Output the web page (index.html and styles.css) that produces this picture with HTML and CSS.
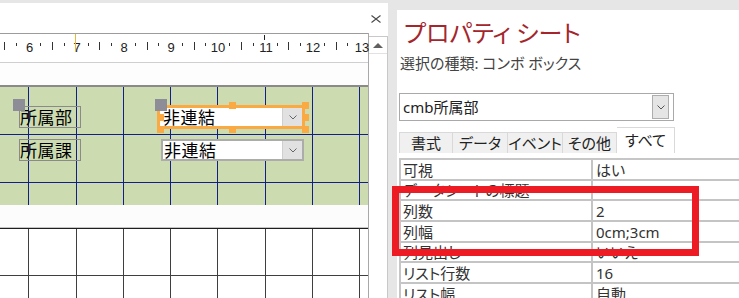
FILE: index.html
```html
<!DOCTYPE html>
<html lang="ja">
<head>
<meta charset="utf-8">
<title>フォーム デザイン</title>
<link rel="stylesheet" href="styles.css">
</head>
<body>
<div class="app">
  <section class="designer">
    <div class="dhead">
      <button class="close" aria-label="閉じる"><svg width="10" height="8" viewBox="0 0 10 8"><path d="M0.5 0.5 L9.5 7.5 M9.5 0.5 L0.5 7.5" stroke="#4a4a4a" stroke-width="1.1" fill="none"/></svg></button>
    </div>
    <div class="dbody">
      <div class="canvas">
        <div class="ruler">
          <svg width="368" height="28" viewBox="0 0 368 28" shape-rendering="crispEdges">
            <path d="M4.5 8v8M52.5 8v8M99.5 8v8M147.5 8v8M194.5 8v8M241.5 8v8M288.5 8v8M336.5 8v8" stroke="#333" stroke-width="1"/>
            <path d="M16.5 9v3M40.5 9v3M64.5 9v3M88.5 9v3M111.5 9v3M135.5 9v3M158.5 9v3M182.5 9v3M205.5 9v3M229.5 9v3M253.5 9v3M277.5 9v3M300.5 9v3M324.5 9v3M347.5 9v3" stroke="#333" stroke-width="1"/>
            <g class="rnum">
              <text x="29.5" y="18">6</text><text x="77" y="18">7</text><text x="124" y="18">8</text><text x="171" y="18">9</text>
              <text x="218" y="18">10</text><text x="266" y="18">11</text><text x="313" y="18">12</text><text x="362" y="18">13</text>
            </g>
            <path d="M75.5 0v18" stroke="#e8b83a" stroke-width="1"/>
            <path d="M264.5 1v5" stroke="#222" stroke-width="1"/>
          </svg>
        </div>
        <div class="hgap"></div>
        <div class="detail">
          <svg class="grid" width="368" height="118" viewBox="0 0 368 118" shape-rendering="crispEdges">
            <path d="M28.5 0v118M76.5 0v118M123.5 0v118M170.5 0v118M217.5 0v118M265.5 0v118M312.5 0v118M359.5 0v118M0 47.5h368M0 95.5h368" stroke="#121f86" stroke-width="1"/>
          </svg>
          <div class="lbl lbl-1">所属部</div>
          <div class="lbl lbl-2">所属課</div>
          <div class="combo combo-sel">
            <span class="ctext">非連結</span>
            <span class="dd"><svg width="8" height="5" viewBox="0 0 8 5"><path d="M0.5 0.5L4 4L7.5 0.5" stroke="#666" fill="none"/></svg></span>
          </div>
          <div class="combo combo-2">
            <span class="ctext">非連結</span>
            <span class="dd"><svg width="8" height="5" viewBox="0 0 8 5"><path d="M0.5 0.5L4 4L7.5 0.5" stroke="#666" fill="none"/></svg></span>
          </div>
          <span class="sh" style="left:229px;top:15px"></span>
          <span class="sh" style="left:302px;top:15px"></span>
          <span class="sh" style="left:157px;top:27px"></span>
          <span class="sh" style="left:302px;top:27px"></span>
          <span class="sh" style="left:157px;top:39px"></span>
          <span class="sh" style="left:229px;top:39px"></span>
          <span class="sh" style="left:302px;top:39px"></span>
          <span class="mh mh-1"></span>
          <span class="mh mh-2"></span>
        </div>
        <div class="secbar"></div>
        <div class="footer">
          <svg class="grid" width="368" height="69" viewBox="0 0 368 69" shape-rendering="crispEdges">
            <path d="M28.5 0v69M76.5 0v69M123.5 0v69M170.5 0v69M217.5 0v69M265.5 0v69M312.5 0v69M359.5 0v69M0 46.5h368" stroke="#3f3f3f" stroke-width="1"/>
          </svg>
        </div>
      </div>
      <div class="vscroll">
        <div class="up"><span class="tri"></span></div>
      </div>
    </div>
  </section>

  <section class="props">
    <h1 class="ptitle">プロパティ シート</h1>
    <p class="psub">選択の種類: コンボ ボックス</p>
    <div class="pcombo">
      <span class="pctext">cmb所属部</span>
      <span class="pdd"><svg width="8" height="5" viewBox="0 0 8 5"><path d="M0.5 0.5L4 4L7.5 0.5" stroke="#555" fill="none"/></svg></span>
    </div>
    <div class="tabs">
      <span class="tab t1">書式</span>
      <span class="tab t2">データ</span>
      <span class="tab t3">イベント</span>
      <span class="tab t4">その他</span>
      <span class="tab t5 active">すべて</span>
    </div>
    <div class="pgrid">
      <div class="row"><span class="k">可視</span><span class="v">はい</span></div>
      <div class="row"><span class="k">データシートの標題</span><span class="v"></span></div>
      <div class="row"><span class="k">列数</span><span class="v">2</span></div>
      <div class="row"><span class="k">列幅</span><span class="v">0cm;3cm</span></div>
      <div class="row"><span class="k">列見出し</span><span class="v">いいえ</span></div>
      <div class="row"><span class="k">リスト行数</span><span class="v">16</span></div>
      <div class="row"><span class="k">リスト幅</span><span class="v">自動</span></div>
    </div>
  </section>
</div>
<div class="callout"></div>
</body>
</html>
```

FILE: styles.css
```css
* { box-sizing: border-box; margin: 0; padding: 0; }
html, body { width: 739px; height: 298px; overflow: hidden; }
body {
  background: #e6e6e6;
  font-family: "Noto Sans", "Noto Sans CJK JP", sans-serif;
  color: #333;
  position: relative;
}
.app { display: flex; height: 298px; padding-top: 3px; overflow: hidden; }

/* ---------- designer ---------- */
.designer { width: 388px; flex-shrink: 0; background: #fff; display: flex; flex-direction: column; overflow: hidden; }
.designer > *, .canvas > * { flex-shrink: 0; }
.dhead { height: 30px; display: flex; justify-content: flex-end; align-items: center; padding-right: 7px; }
.close { border: 0; background: none; width: 10px; height: 8px; display: block; margin-top: 2px; }
.close svg { display: block; }
.dbody { flex: 1 1 auto; display: flex; }
.canvas { width: 369px; border-right: 1px solid #a8a8a8; display: flex; flex-direction: column; }
.ruler { height: 30px; border-top: 1px solid #9c9c9c; border-bottom: 1px solid #cfcfcf; }
.ruler svg { display: block; overflow: visible; }
.rnum text { font-family: "Liberation Sans", Arial, sans-serif; font-size: 13px; fill: #222; text-anchor: middle; }
.hgap { height: 22px; background: #fdfdfd; }
.detail { position: relative; height: 120px; border-top: 2px solid #8a8a8a; background: #cddcb0; }
.grid { position: absolute; left: 0; top: 0; display: block; }
.secbar { height: 23px; background: #fcfcfc; border-bottom: 1px solid #c4c4c4; }
.footer { flex: 1 1 auto !important; position: relative; border-top: 1px solid #1e1e1e; background: #fff; }

.lbl {
  position: absolute; left: 19px; width: 62px; height: 22px;
  border: 1px solid #8a8a8a;
  font-family: "Noto Sans CJK JP", sans-serif; font-size: 17px; line-height: 20px; color: #000;
  letter-spacing: 0.5px; white-space: nowrap;
}
.lbl-1 { top: 19px; }
.lbl-2 { top: 52px; }

.combo { position: absolute; background: #fff; }
.ctext { display: block; font-family: "Noto Sans CJK JP", sans-serif; font-size: 17px; letter-spacing: 0.5px; color: #000; white-space: nowrap; }
.combo-sel { left: 157px; top: 18px; width: 148px; height: 24px; border: 3px solid #fba943; }
.combo-sel .ctext { padding-left: 3px; line-height: 18px; }
.combo-2 { left: 161px; top: 52px; width: 143px; height: 22px; border: 2px solid #acacac; }
.combo-2 .ctext { padding-left: 1px; line-height: 18px; }
.dd {
  position: absolute; right: 0; top: 0; bottom: 0; width: 20px;
  background: #e1e1e1; border-left: 1px solid #cfcfcf;
  display: flex; align-items: center; justify-content: center;
}
.dd svg { display: block; }
.sh { position: absolute; width: 7px; height: 7px; background: #fba943; }
.mh { position: absolute; width: 12px; height: 12px; background: #8c8d96; top: 12px; }
.mh-1 { left: 13px; }
.mh-2 { left: 155px; }

.vscroll { width: 19px; margin-top: 3px; border-top: 1px solid #c8c8c8; border-right: 1px solid #c8c8c8; }
.up { height: 17px; border-bottom: 1px solid #e2e2e2; display: flex; align-items: center; justify-content: center; }
.tri { width: 0; height: 0; border-left: 5.5px solid transparent; border-right: 5.5px solid transparent; border-bottom: 5px solid #606060; }

/* ---------- property sheet ---------- */
.props {
  width: 342px; flex-shrink: 0; margin-left: 9px; margin-top: 7px; height: 288px;
  background: #fff; padding-left: 2px; overflow: hidden;
  display: flex; flex-direction: column;
  font-feature-settings: "palt";
}
.props > * { flex-shrink: 0; }
.ptitle {
  margin-top: 7px; margin-left: 5px; height: 30px;
  font-family: "Noto Sans CJK JP", sans-serif; font-weight: 400;
  font-size: 24px; line-height: 30px; color: #a4262c; white-space: nowrap;
}
.psub { margin-top: 7px; margin-left: 1px; height: 19px; font-size: 15px; line-height: 19px; color: #444; white-space: nowrap; }
.pcombo {
  position: relative; margin-top: 20px; width: 275px; height: 28px;
  border: 1px solid #a9a9a9; display: flex; align-items: center;
}
.pctext { padding-left: 3px; font-size: 15px; line-height: 20px; color: #222; }
.pdd {
  position: absolute; right: 4px; top: 1px; width: 17px; height: 24px;
  background: #e5e5e5; border: 1px solid #adadad;
  display: flex; align-items: center; justify-content: center;
}
.pdd svg { display: block; }

.tabs { margin-top: 6px; height: 26px; display: flex; align-items: flex-end; }
.tab {
  height: 21px; background: #f0f0f0; border: 1px solid #d9d9d9; border-bottom: 0; border-left: 0;
  font-size: 15px; line-height: 20px; color: #222; text-align: center; white-space: nowrap;
}
.t1 { width: 54px; border-left: 1px solid #d9d9d9; }
.t2 { width: 55px; }
.t3 { width: 55px; }
.t4 { width: 54px; }
.t5 { width: 58px; }
.tab.active { height: 26px; background: #fff; line-height: 24px; }

.pgrid { margin-top: 5px; border-top: 2px solid #c6c6c6; border-left: 2px solid #c6c6c6; width: 340px; }
.row { display: flex; height: 20.7px; border-bottom: 2px solid #c4c4c4; }
.k, .v { font-size: 15px; line-height: 17px; padding-top: 1.5px; white-space: nowrap; overflow: hidden; color: #333; }
.k { width: 192px; border-right: 2px solid #c4c4c4; padding-left: 2px; }
.v { flex: 1; padding-left: 3px; }

/* annotation */
.callout { position: absolute; left: 392px; top: 186px; width: 307px; height: 70px; border: 7px solid #ed1c24; }
```
